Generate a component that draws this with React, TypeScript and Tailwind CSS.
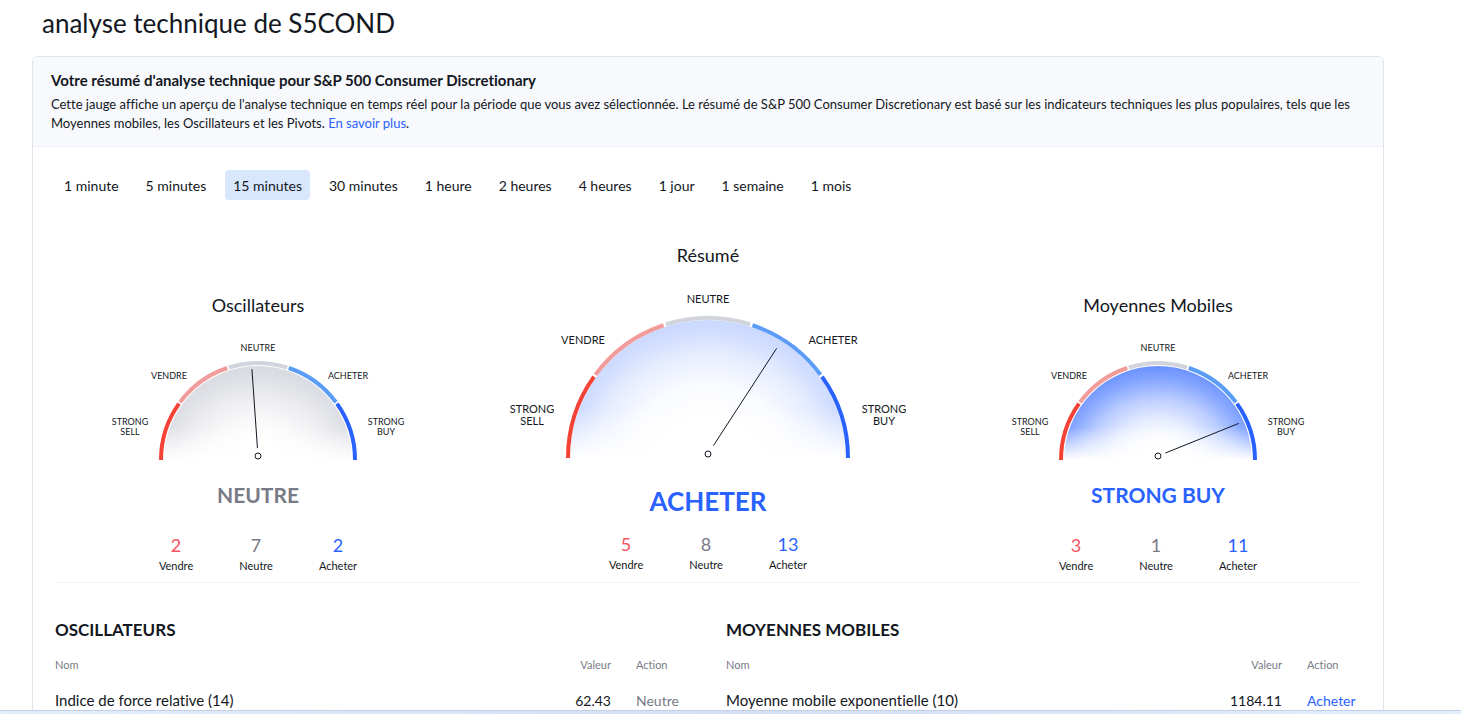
const intervals = [
  "1 minute",
  "5 minutes",
  "15 minutes",
  "30 minutes",
  "1 heure",
  "2 heures",
  "4 heures",
  "1 jour",
  "1 semaine",
  "1 mois",
];

const segments = [
  { from: 180, to: 144, color: "#f44336" },
  { from: 144, to: 108, color: "#f29b9b" },
  { from: 108, to: 72, color: "#d1d4dc" },
  { from: 72, to: 36, color: "#5b9cf6" },
  { from: 36, to: 0, color: "#2962ff" },
];

type GaugeData = {
  id: string;
  title: string;
  verdict: string;
  verdictClass: string;
  glow: string;
  glowOpacity: number;
  needle: number;
  counts: [number, number, number];
  large?: boolean;
};

const gauges: GaugeData[] = [
  {
    id: "oscillators",
    title: "Oscillateurs",
    verdict: "NEUTRE",
    verdictClass: "text-[#787b86]",
    glow: "#70758c",
    glowOpacity: 0.27,
    needle: 94,
    counts: [2, 7, 2],
  },
  {
    id: "summary",
    title: "Résumé",
    verdict: "ACHETER",
    verdictClass: "text-[#2962ff]",
    glow: "#2962ff",
    glowOpacity: 0.25,
    needle: 57,
    counts: [5, 8, 13],
    large: true,
  },
  {
    id: "averages",
    title: "Moyennes Mobiles",
    verdict: "STRONG BUY",
    verdictClass: "text-[#2962ff]",
    glow: "#2962ff",
    glowOpacity: 0.7,
    needle: 22,
    counts: [3, 1, 11],
  },
];

const tables = [
  {
    title: "OSCILLATEURS",
    rows: [{ name: "Indice de force relative (14)", value: "62.43", action: "Neutre" }],
  },
  {
    title: "MOYENNES MOBILES",
    rows: [{ name: "Moyenne mobile exponentielle (10)", value: "1184.11", action: "Acheter" }],
  },
];

function point(cx: number, cy: number, r: number, deg: number) {
  const rad = (deg * Math.PI) / 180;
  return [cx + r * Math.cos(rad), cy - r * Math.sin(rad)];
}

function arc(cx: number, cy: number, r: number, from: number, to: number) {
  const [x1, y1] = point(cx, cy, r, from);
  const [x2, y2] = point(cx, cy, r, to);
  return `M${x1} ${y1}A${r} ${r} 0 0 1 ${x2} ${y2}`;
}

function Dial({ gauge }: { gauge: GaugeData }) {
  const { id, large, glow, glowOpacity, needle } = gauge;
  const width = large ? 410 : 310;
  const height = large ? 170 : 122;
  const cx = width / 2;
  const cy = height;
  const radius = large ? 140 : 97;
  const inner = large ? 138 : 94;
  const hubY = cy - 4;
  const [x1, y1] = point(cx, hubY, large ? 10 : 8, needle);
  const [x2, y2] = point(cx, hubY, large ? 126 : 87, needle);

  // offset along the radius, share of the full glow
  const stops = large
    ? [[0.3, 0], [0.53, 0.1], [0.75, 0.45], [0.9, 0.83], [1, 1]]
    : [[0.1, 0], [0.25, 0.03], [0.42, 0.15], [0.65, 0.45], [0.85, 0.8], [1, 1]];

  const labels = large
    ? [
        { x: 0, y: -155, lines: ["NEUTRE"] },
        { x: -125, y: -114, lines: ["VENDRE"] },
        { x: 125, y: -114, lines: ["ACHETER"] },
        { x: -176, y: -45, lines: ["STRONG", "SELL"] },
        { x: 176, y: -45, lines: ["STRONG", "BUY"] },
      ]
    : [
        { x: 0, y: -109, lines: ["NEUTRE"] },
        { x: -89, y: -81, lines: ["VENDRE"] },
        { x: 90, y: -81, lines: ["ACHETER"] },
        { x: -128, y: -35, lines: ["STRONG", "SELL"] },
        { x: 128, y: -35, lines: ["STRONG", "BUY"] },
      ];

  return (
    <svg width={width} height={height} viewBox={`0 0 ${width} ${height}`} className="overflow-visible">
      <defs>
        <radialGradient
          id={`${id}-glow`}
          gradientUnits="userSpaceOnUse"
          cx="0"
          cy="0"
          r={inner}
          gradientTransform={`translate(${cx} ${cy}) scale(${large ? 1.08 : 1.15} 1)`}
        >
          {stops.map(([offset, share]) => (
            <stop key={offset} offset={offset} stopColor={glow} stopOpacity={share * glowOpacity} />
          ))}
        </radialGradient>
        <linearGradient id={`${id}-fade`} x1="0" y1="0" x2="0" y2="1">
          <stop offset="0.65" stopColor="#fff" />
          <stop offset="1" stopColor="#000" />
        </linearGradient>
        <mask id={`${id}-mask`}>
          <rect x={cx - inner} y={cy - inner} width={inner * 2} height={inner} fill={`url(#${id}-fade)`} />
        </mask>
      </defs>
      <path
        d={`${arc(cx, cy, inner, 180, 0)}Z`}
        fill={`url(#${id}-glow)`}
        mask={`url(#${id}-mask)`}
      />
      {segments.map(({ from, to, color }) => (
        <path
          key={color}
          d={arc(cx, cy, radius, from === 180 ? from : from - 0.5, to === 0 ? to : to + 0.5)}
          fill="none"
          stroke={color}
          strokeWidth="4"
        />
      ))}
      <line x1={x1} y1={y1} x2={x2} y2={y2} stroke="#131722" />
      <circle cx={cx} cy={hubY} r="3" fill="none" stroke="#131722" />
      {labels.map(({ x, y, lines }) => (
        <text
          key={lines.join(" ")}
          textAnchor="middle"
          fill="#131722"
          className={large ? "text-[11px]" : "text-[9px]"}
        >
          {lines.map((line, i) => (
            <tspan key={line} x={cx + x} y={cy + y + i * (large ? 12 : 10)}>
              {line}
            </tspan>
          ))}
        </text>
      ))}
    </svg>
  );
}

function Gauge({ gauge }: { gauge: GaugeData }) {
  const [sell, neutral, buy] = gauge.counts;
  const counters = [
    { label: "Vendre", value: sell, color: "text-[#f7525f]" },
    { label: "Neutre", value: neutral, color: "text-[#787b86]" },
    { label: "Acheter", value: buy, color: "text-[#2962ff]" },
  ];

  return (
    <div className={`flex flex-col items-center ${gauge.large ? "pb-px" : ""}`}>
      <h2 className="mb-[21px] text-lg leading-6">{gauge.title}</h2>
      <Dial gauge={gauge} />
      <div
        className={`font-bold ${gauge.verdictClass} ${
          gauge.large ? "mt-[23px] text-[26px] leading-10" : "mt-[19px] text-[21px] leading-8"
        }`}
      >
        {gauge.verdict}
      </div>
      <div className={`flex gap-[46px] ${gauge.large ? "mt-3" : "mt-[23px]"}`}>
        {counters.map(({ label, value, color }) => (
          <div key={label} className="flex flex-col items-center gap-0.5">
            <span className={`text-lg leading-[22px] ${color}`}>{value}</span>
            <span className="text-[11px] leading-4">{label}</span>
          </div>
        ))}
      </div>
    </div>
  );
}

export default function App() {
  return (
    <div className="flex h-screen flex-col overflow-hidden bg-white font-['Trebuchet_MS','Lato',sans-serif] text-[#131722] [font-variant-ligatures:none]">
      <main className="min-h-0 flex-1 overflow-hidden pr-[77px] pl-8">
        <h1 className="pt-[3px] pb-[13px] pl-[10px] text-[26px] leading-10">analyse technique de S5COND</h1>
        <div className="rounded-md border border-[#e0e3eb]">
          <header className="rounded-t-md border-b border-[#f0f3fa] bg-[#f8f9fd] px-[18px] py-[13px]">
            <h3 className="text-[15px] leading-5 font-bold">
              Votre résumé d'analyse technique pour S&amp;P 500 Consumer Discretionary
            </h3>
            <p className="mt-[5px] text-[13px] leading-[19px]">
              Cette jauge affiche un aperçu de l'analyse technique en temps réel pour la période que vous avez
              sélectionnée. Le résumé de S&amp;P 500 Consumer Discretionary est basé sur les indicateurs techniques les
              plus populaires, tels que les Moyennes mobiles, les Oscillateurs et les Pivots.{" "}
              <a href="#" className="text-[#2962ff]">
                En savoir plus
              </a>
              .
            </p>
          </header>

          <div className="mt-[23px] flex gap-[11px] pl-[23px]">
            {intervals.map((interval) => (
              <button
                key={interval}
                className={`h-[30px] rounded px-2 pt-[2px] text-sm ${interval === "15 minutes" ? "bg-[#d9e7fd]" : ""}`}
              >
                {interval}
              </button>
            ))}
          </div>

          <section className="mt-[43px] grid grid-cols-3 items-end">
            {gauges.map((gauge) => (
              <Gauge key={gauge.id} gauge={gauge} />
            ))}
          </section>

          <div className="mx-[22px] mt-2 grid grid-cols-2 gap-9 border-t border-[#f0f3fa] pt-[35px]">
            {tables.map(({ title, rows }) => (
              <section key={title}>
                <h2 className="text-[17px] leading-6 font-bold">{title}</h2>
                <table className="mt-[5px] w-full text-sm">
                  <thead>
                    <tr className="h-9 text-left text-[11px] text-[#787b86]">
                      <th className="font-normal">Nom</th>
                      <th className="text-right font-normal">Valeur</th>
                      <th className="w-[79px] pl-[25px] font-normal">Action</th>
                    </tr>
                  </thead>
                  <tbody>
                    {rows.map(({ name, value, action }) => (
                      <tr key={name} className="h-9">
                        <td className="text-[15px]">{name}</td>
                        <td className="text-right">{value}</td>
                        <td className={`pl-[25px] ${action === "Acheter" ? "text-[#2962ff]" : "text-[#787b86]"}`}>
                          {action}
                        </td>
                      </tr>
                    ))}
                  </tbody>
                </table>
              </section>
            ))}
          </div>
        </div>
      </main>
      <div className="h-1 border-t border-[#c5cfe4] bg-gradient-to-r from-[#e3edfb] via-[#d5dff5] to-[#e3edfb]" />
    </div>
  );
}
